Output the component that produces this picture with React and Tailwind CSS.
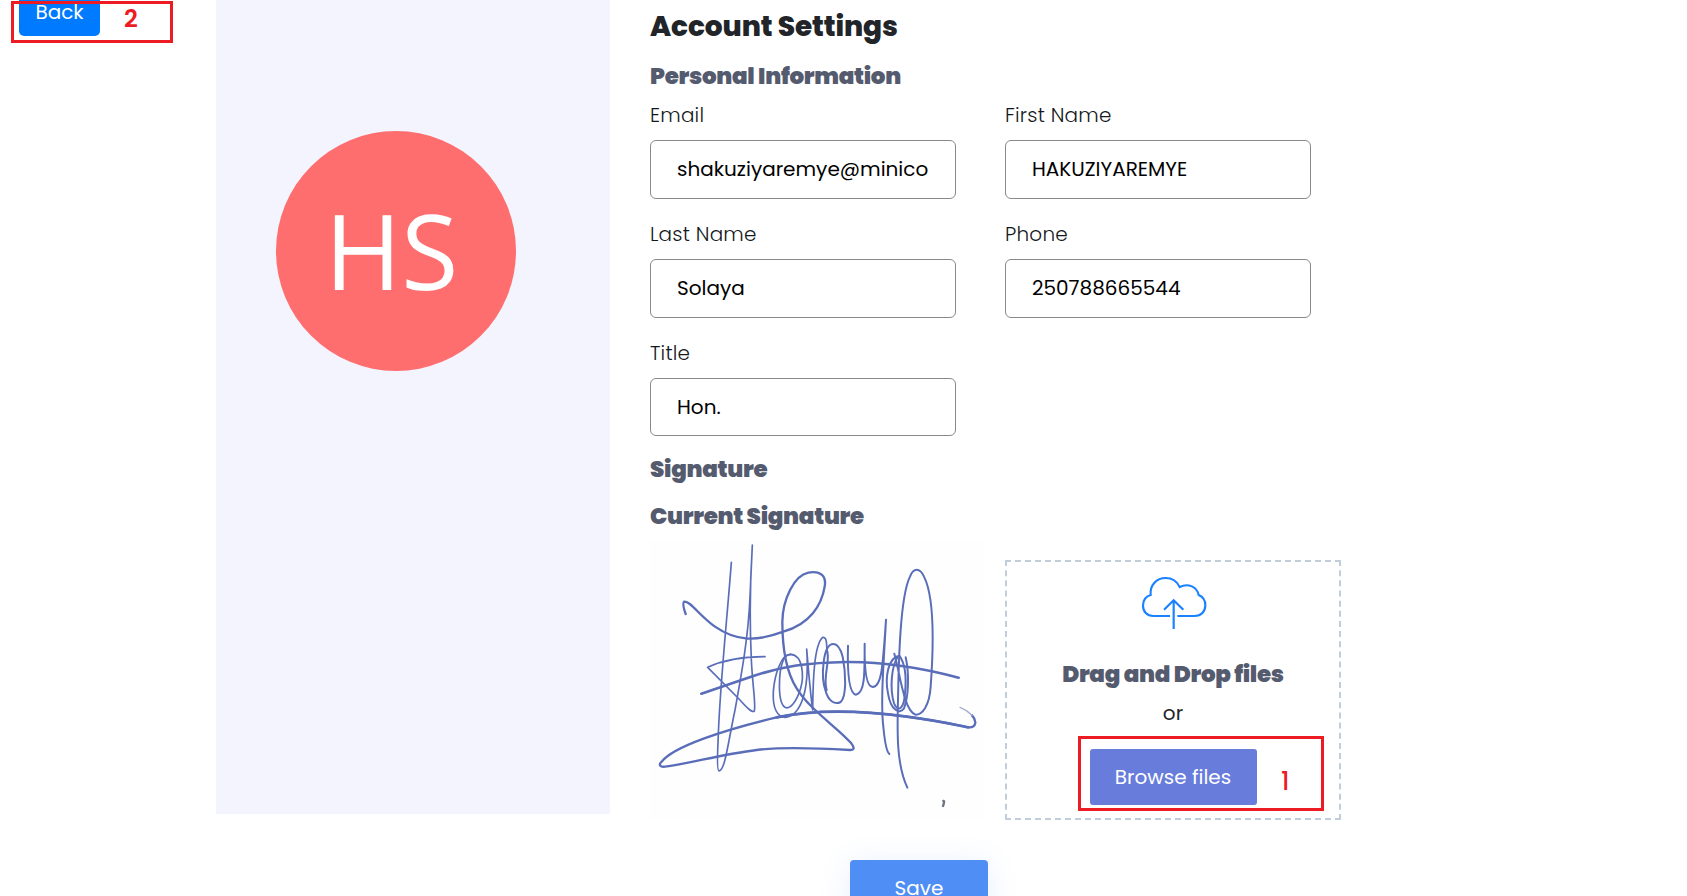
function Field({ label, value }) {
  return (
    <label className="block">
      <span className="block leading-[30px] font-light tracking-[0.2px] text-[#15181b]">{label}</span>
      <input
        className="mt-[10px] block h-[58.4px] w-full rounded-[6px] border border-[#898989] bg-white pr-[26px] pb-[1px] pl-[26px] text-black outline-none"
        defaultValue={value}
      />
    </label>
  );
}

function Heading({ children, className = "" }) {
  return (
    <h4 className={"text-[23px] leading-[28px] font-black tracking-[-0.3px] text-[#555b6e] " + className}>{children}</h4>
  );
}

function CloudUpload() {
  return (
    <svg className="ml-[2px] h-[54px] w-[66px]" viewBox="0 0 198 162" fill="none" stroke="#1a82ff" strokeWidth="6.5">
      <path d="M87 123H37C18 123 6 110 6 92C6 76 15 64 29 60C26 30 47 9 74 9C93 9 108 19 116 36C142 23 168 36 173 60C185 65 193 76 193 91C193 110 180 123 161 123H109" />
      <path d="M98 162V75M69 104L98 76L127 104" />
    </svg>
  );
}

function Signature() {
  return (
    <svg
      className="h-[280px] w-[335px] bg-[#fefefe]"
      viewBox="30 30 1005 840"
      fill="none"
      stroke="#5a6db9"
      strokeWidth="7"
      strokeLinecap="round"
      strokeLinejoin="round"
    >
      <path d="M137 252C130 232 127 218 133 215C150 212 178 257 225 290C290 335 350 335 430 305C510 283 545 225 554 170C561 131 535 123 505 128C462 136 428 210 427 275C427 350 435 420 470 475C510 540 590 590 634 640C645 655 642 660 630 660C540 655 430 650 350 660C250 672 150 700 75 710C60 712 55 704 65 695C100 650 250 600 410 562C540 535 690 545 800 560C880 570 940 583 985 592C1010 594 1011 572 996 556" />
      <path d="M996 556C984 543 970 536 960 532" stroke="#a9b0cf" strokeWidth="4" />
      <path d="M274 97C262 260 238 480 234 640C231 700 232 722 237 723C255 720 262 650 285 540C305 430 325 320 330 200L337 45C327 200 330 300 334 390C338 470 348 525 343 543C338 550 320 533 300 510L203 412C240 395 300 380 375 380" strokeWidth="5" />
      <path d="M184 491C230 475 290 455 340 438C430 408 500 398 620 396C730 395 850 415 956 443" strokeWidth="8" />
      <path d="M410 562C540 535 690 545 800 560C880 570 940 583 985 592" strokeWidth="8" />
      <path d="M452 373C425 372 404 430 400 485C397 535 412 560 435 562C475 560 510 500 500 357C506 430 510 480 518 540C519 450 522 345 548 322C563 320 558 345 562 365" strokeWidth="5" />
      <path d="M452 373C490 375 492 440 482 475C470 515 450 540 435 532C412 518 415 425 430 390C435 378 445 373 452 373Z" strokeWidth="5" />
      <path d="M580 342C547 342 543 445 556 480C565 515 585 525 602 516C620 500 618 430 608 380C600 350 590 342 580 342ZM562 365C570 400 548 440 560 480M624 347C622 420 625 490 648 494C675 490 674 430 674 341C673 400 675 470 698 471C724 470 728 420 738 269C732 390 720 520 731 600C735 640 740 665 748 672" strokeWidth="6" />
      <path d="M802 773C768 700 772 600 774 510C776 400 780 200 810 140C820 112 840 112 852 140C885 205 880 360 872 470C868 530 846 554 827 554C792 545 780 430 763 371" strokeWidth="6" />
      <path d="M778 377C745 382 734 440 744 490C752 540 778 555 792 535C806 500 808 430 797 382M775 378C752 410 750 480 762 520C775 550 792 535 795 490C800 440 795 400 778 377" strokeWidth="6" />
      <path d="M910 813C914 812 912 820 909 828" stroke="#6f7585" />
    </svg>
  );
}

export default function App() {
  return (
    <div className="relative flex h-[896px] w-[1687px] items-start overflow-hidden bg-white font-[Poppins,sans-serif] text-[20px]">
      <div className="w-[216px] shrink-0 pl-[19px]">
        <button className="-mt-[12px] block h-[48px] w-[81px] rounded-[5px] bg-[#007bff] leading-[30px] text-white">
          Back
        </button>
      </div>

      <aside className="flex h-[814px] w-[394px] shrink-0 justify-center bg-[#f3f4fd] pr-[34px] pt-[131px]">
        <div className="flex h-[240px] w-[240px] items-center justify-center rounded-full bg-[#ff6e6e] pr-[9px] pb-[3px] font-['Open_Sans',sans-serif] text-[104px] leading-none text-white">
          HS
        </div>
      </aside>

      <main className="w-[740px] shrink-0 pt-[10px] pl-[40px]">
        <h3 className="text-[28px] leading-[34px] font-extrabold tracking-[-0.1px] text-[#212529]">Account Settings</h3>
        <Heading className="mt-[18px]">Personal Information</Heading>
        <div className="mt-[10.4px] grid grid-cols-[306px_306px] gap-x-[49px] gap-y-[20.4px]">
          <Field label="Email" value="shakuziyaremye@minicom.gov.rw" />
          <Field label="First Name" value="HAKUZIYAREMYE" />
          <Field label="Last Name" value="Solaya" />
          <Field label="Phone" value="250788665544" />
          <Field label="Title" value="Hon." />
        </div>
        <Heading className="mt-[18.6px]">Signature</Heading>
        <Heading className="mt-[19px]">Current Signature</Heading>
        <div className="flex items-start gap-[20px] pt-[10px]">
          <Signature />
          <div className="mt-[20px] flex h-[260px] w-[336px] shrink-0 flex-col items-center border-2 border-dashed border-[#c2cdda] pt-[13px]">
            <CloudUpload />
            <Heading className="mt-[31px]">Drag and Drop files</Heading>
            <p className="mt-[10px] leading-[30px] text-[#212529]">or</p>
            <button className="mt-[21px] h-[56px] w-[167px] shrink-0 rounded-[3px] bg-[#677cdb] text-white">
              Browse files
            </button>
          </div>
        </div>
        <button className="mt-[40px] ml-[200px] h-[56px] w-[138px] rounded-[4px] bg-[#4f8ff5] text-white shadow-[0_5px_30px_rgba(79,143,245,0.15)]">
          Save
        </button>
      </main>

      <div className="absolute top-[1px] left-[11px] h-[42px] w-[162px] border-3 border-[#ed1c24]">
        <span className="absolute top-[-3px] left-[110px] text-[24px] leading-[36px] font-semibold text-[#ed1c24]">2</span>
      </div>
      <div className="absolute top-[736px] left-[1078px] h-[75px] w-[246px] border-3 border-[#ed1c24]">
        <span className="absolute top-[25px] left-[200px] text-[24px] leading-[36px] font-medium text-[#ed1c24]">1</span>
      </div>
    </div>
  );
}
